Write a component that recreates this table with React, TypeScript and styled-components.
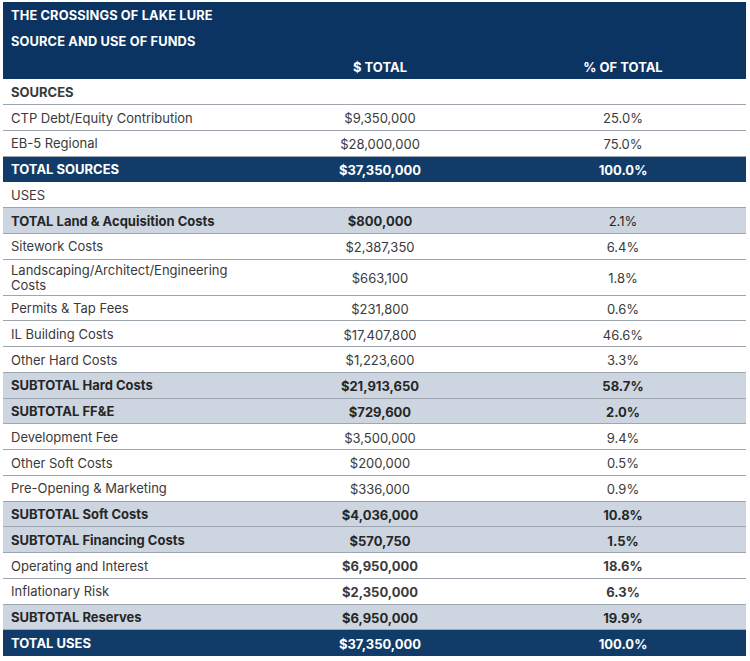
import React from "react";
import styled, { createGlobalStyle } from "styled-components";

const Global = createGlobalStyle`
  html, body { margin: 0; padding: 0; background: #ffffff; }
  body { font-family: Inter, "Liberation Sans", Arial, sans-serif; }
`;

const Sheet = styled.div`
  margin: 2px 4px 0 3px;
  width: 743px;
  font-size: 13px;
  color: #3a3a3a;
`;

const HeadBlock = styled.div`
  background: #0c3463;
  color: #ffffff;
  font-weight: 700;
`;

const TitleRow = styled.div`
  height: 25.8px;
  display: flex;
  align-items: center;
  padding-left: 8px;
  padding-top: 1px;
  box-sizing: border-box;
  font-size: 12.8px;
  letter-spacing: 0.15px;
`;

type Tone = "plain" | "sub" | "total" | "head";

const Row = styled.div<{ $tone?: Tone; $tall?: boolean }>`
  display: grid;
  grid-template-columns: 257px 240px 1fr;
  align-items: center;
  box-sizing: border-box;
  padding-top: 2px;
  height: ${(p) => (p.$tall ? "36px" : "25.75px")};
  background: ${(p) =>
    p.$tone === "sub" ? "#cdd6e0" : p.$tone === "total" ? "#113c69" : p.$tone === "head" ? "#0c3463" : "#ffffff"};
  color: ${(p) => (p.$tone === "total" || p.$tone === "head" ? "#ffffff" : p.$tone === "sub" ? "#262626" : "#3a3a3a")};
  font-weight: ${(p) => (p.$tone && p.$tone !== "plain" ? 700 : 400)};
  border-bottom: 1px solid
    ${(p) => (p.$tone === "total" || p.$tone === "head" ? "transparent" : "#9ea6b0")};
`;

const Label = styled.div<{ $bold?: boolean }>`
  padding-left: 8px;
  padding-right: 14px;
  line-height: 15.5px;
  font-weight: ${(p) => (p.$bold ? 700 : "inherit")};
`;

const Num = styled.div<{ $weight?: number }>`
  text-align: center;
  font-weight: ${(p) => p.$weight ?? "inherit"};
`;

type Line = {
  label: string;
  total?: string;
  pct?: string;
  tone?: Tone;
  labelBold?: boolean;
  numWeight?: number;
  pctWeight?: number;
  tall?: boolean;
};

const lines: Line[] = [
  { label: "SOURCES", labelBold: true },
  { label: "CTP Debt/Equity Contribution", total: "$9,350,000", pct: "25.0%" },
  { label: "EB-5 Regional", total: "$28,000,000", pct: "75.0%" },
  { label: "TOTAL SOURCES", total: "$37,350,000", pct: "100.0%", tone: "total" },
  { label: "USES" },
  { label: "TOTAL Land & Acquisition Costs", total: "$800,000", pct: "2.1%", tone: "sub", pctWeight: 400 },
  { label: "Sitework Costs", total: "$2,387,350", pct: "6.4%" },
  { label: "Landscaping/Architect/Engineering Costs", total: "$663,100", pct: "1.8%", tall: true },
  { label: "Permits & Tap Fees", total: "$231,800", pct: "0.6%" },
  { label: "IL Building Costs", total: "$17,407,800", pct: "46.6%" },
  { label: "Other Hard Costs", total: "$1,223,600", pct: "3.3%" },
  { label: "SUBTOTAL Hard Costs", total: "$21,913,650", pct: "58.7%", tone: "sub" },
  { label: "SUBTOTAL FF&E", total: "$729,600", pct: "2.0%", tone: "sub" },
  { label: "Development Fee", total: "$3,500,000", pct: "9.4%" },
  { label: "Other Soft Costs", total: "$200,000", pct: "0.5%" },
  { label: "Pre-Opening & Marketing", total: "$336,000", pct: "0.9%" },
  { label: "SUBTOTAL Soft Costs", total: "$4,036,000", pct: "10.8%", tone: "sub" },
  { label: "SUBTOTAL Financing Costs", total: "$570,750", pct: "1.5%", tone: "sub" },
  { label: "Operating and Interest", total: "$6,950,000", pct: "18.6%", numWeight: 700, pctWeight: 700 },
  { label: "Inflationary Risk", total: "$2,350,000", pct: "6.3%", numWeight: 700, pctWeight: 700 },
  { label: "SUBTOTAL Reserves", total: "$6,950,000", pct: "19.9%", tone: "sub" },
  { label: "TOTAL USES", total: "$37,350,000", pct: "100.0%", tone: "total" },
];

export default function App() {
  return (
    <>
      <Global />
      <Sheet>
        <HeadBlock>
          <TitleRow>THE CROSSINGS OF LAKE LURE</TitleRow>
          <TitleRow>SOURCE AND USE OF FUNDS</TitleRow>
        </HeadBlock>
        <Row $tone="head">
          <Label />
          <Num>$ TOTAL</Num>
          <Num>% OF TOTAL</Num>
        </Row>
        {lines.map((l, i) => (
          <Row key={i} $tone={l.tone ?? "plain"} $tall={l.tall}>
            <Label $bold={l.labelBold}>{l.label}</Label>
            <Num $weight={l.numWeight}>{l.total ?? ""}</Num>
            <Num $weight={l.pctWeight}>{l.pct ?? ""}</Num>
          </Row>
        ))}
      </Sheet>
    </>
  );
}
